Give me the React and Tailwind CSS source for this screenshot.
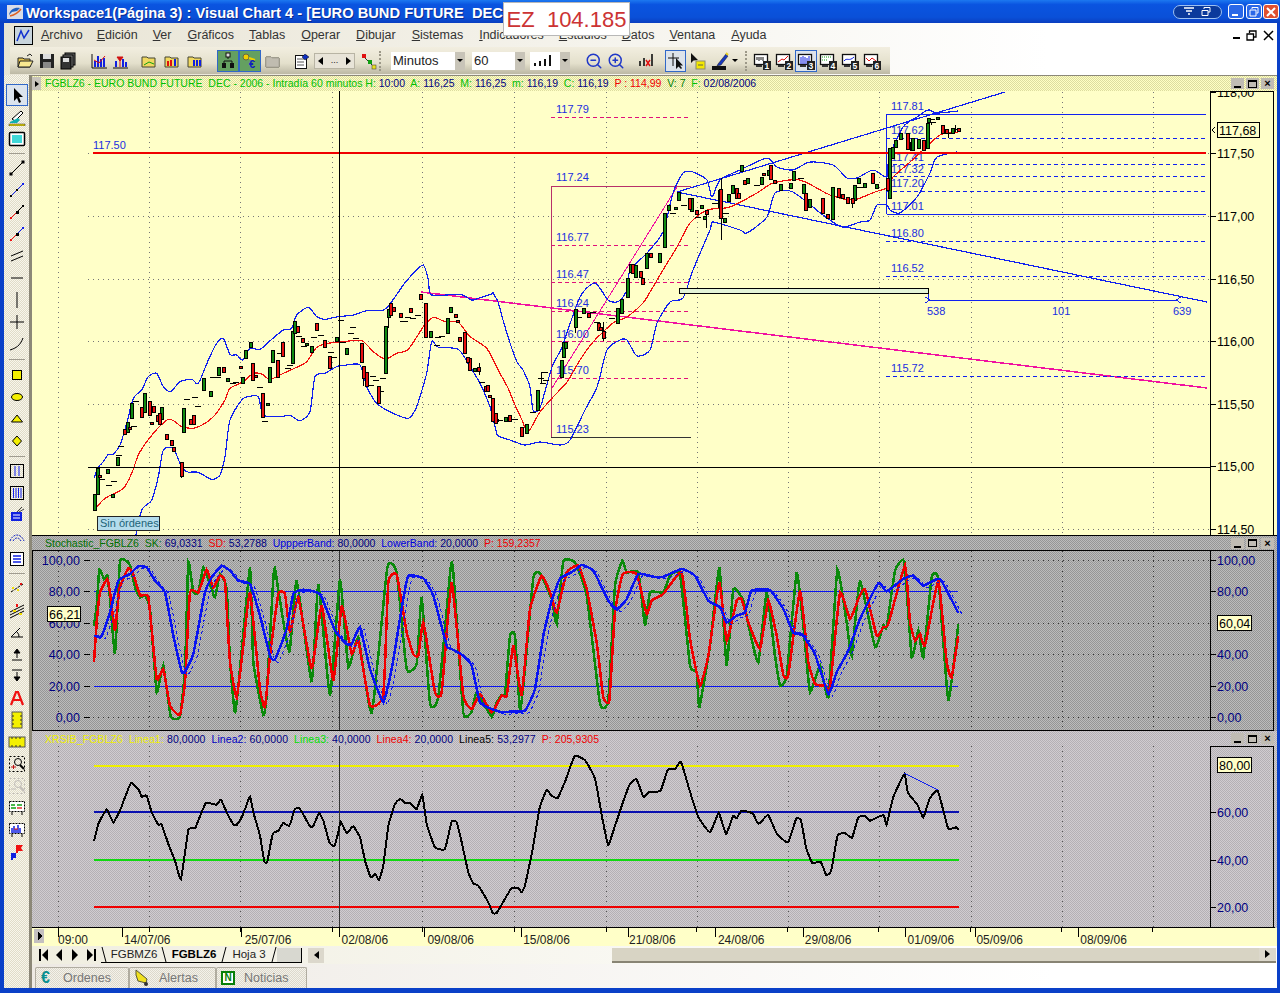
import React from 'react';
import { ZoomIn, ZoomOut } from 'lucide-react';

const z6 = (x, y) => [860 + x / 3, 90 + y / 3];
const z8 = (x, y) => [480 + x / 3, 90 + y / 3];
const z9 = (x, y) => [80 + x / 3, 260 + y / 3];
const pts = (a) => a.map(([x, y]) => `${x.toFixed(1)},${y.toFixed(1)}`).join(' ');
const pairs = (a, f) => a.map(([x, y]) => f(x, y));
const joinAt = (a, fa, b, fb, split) => [
  ...pairs(a, fa).filter((p) => p[0] < split),
  ...pairs(b, fb).filter((p) => p[0] >= split),
];

// hermite spline through the traced points, so the series don't look like straight segments
const smooth = (a, k = 0.35, n = 5) => {
  const out = [];
  for (let i = 0; i < a.length - 1; i++) {
    const p0 = a[Math.max(i - 1, 0)];
    const p1 = a[i];
    const p2 = a[i + 1];
    const p3 = a[Math.min(i + 2, a.length - 1)];
    for (let j = 0; j < n; j++) {
      const t = j / n;
      const h00 = 2 * t * t * t - 3 * t * t + 1;
      const h10 = t * t * t - 2 * t * t + t;
      const h01 = -2 * t * t * t + 3 * t * t;
      const h11 = t * t * t - t * t;
      out.push([0, 1].map((d) =>
        h00 * p1[d] + h10 * k * (p2[d] - p0[d]) + h01 * p2[d] + h11 * k * (p3[d] - p1[d])
      ));
    }
  }
  out.push(a[a.length - 1]);
  return out;
};

const upperBand = smooth([
  ...pairs([[43,655],[52,625],[70,605],[85,583],[100,582],[120,555],[140,490],[160,415],[185,390],[205,350],[230,340],[250,380],[272,395],[300,365],[335,358],[355,370],[385,300],[410,250],[430,235],[450,283],[470,285],[488,300],[510,265],[540,268],[575,238],[610,210],[635,205],[650,165],[685,142],[710,170],[735,178],[775,170],[820,165],[860,152],[910,150],[935,125],[970,75],[1000,40],[1030,15],[1045,60],[1055,105],[1140,103],[1175,120],[1200,113],[1240,100]], z9),
  [493,293],[498,302],[503,320],[510,343],[517,362],[523,370],[530,387],[533,410],[540,408],[552,367],[562,347],[580,297],[595,283],[608,300],[617,302],[623,297],[628,287],[630,270],[647,253],[663,232],[673,193],[683,173],[693,172],[707,180],[712,197],[720,180],[740,170],[767,158],[777,167],[793,170],[810,162],[833,165],[847,178],[857,178],[873,170],[887,177],[889,157],[903,127],[917,117],[928,110],[937,113],[958,111],
]);
const lowerBand = smooth([
  ...pairs([[167,830],[185,750],[215,720],[235,650],[250,570],[280,565],[300,610],[320,635],[355,637],[395,658],[420,645],[435,590],[450,480],[485,420],[505,410],[535,410],[550,465],[600,470],[630,466],[660,482],[690,455],[705,350],[735,340],[770,320],[800,315],[840,315],[860,380],[890,430],[935,458],[985,475],[1010,440],[1040,340],[1055,245],[1075,262],[1135,268],[1170,320],[1200,370],[1230,440],[1250,520],[1260,530]], z9),
  [510,440],[525,445],[540,442],[560,445],[570,440],[585,410],[597,387],[607,350],[620,340],[627,340],[637,356],[650,350],[657,323],[670,302],[683,298],[693,270],[710,230],[713,222],[740,230],[747,233],[767,217],[775,193],[793,192],[823,215],[842,227],[860,222],[870,220],[877,205],[887,205],[890,210],[900,213],[917,197],[930,173],[937,157],[957,152],
]);
const movingAvg = smooth([
  ...pairs([[43,750],[75,715],[130,685],[155,640],[175,585],[200,545],[235,503],[265,478],[285,485],[305,500],[340,505],[375,490],[405,465],[435,420],[450,385],[490,365],[520,340],[545,342],[570,358],[610,340],[650,322],[680,305],[710,262],[745,250],[790,245],[845,242],[880,275],[915,297],[950,280],[985,268],[1030,200],[1060,172],[1095,185],[1135,187],[1170,230],[1220,265],[1260,340]], z9),
  [508,388],[515,405],[522,420],[528,432],[540,412],[555,395],[567,382],[580,360],[593,342],[613,323],[627,317],[643,303],[653,287],[663,270],[677,247],[690,223],[707,210],[730,207],[757,193],[773,183],[800,180],[830,195],[853,200],[875,192],[886,188],[893,177],[910,162],[923,150],[940,135],[958,132],
]);

const toCandles = (list, f, color) =>
  list.map(([x, t, b]) => {
    const [px, pt] = f(x, t);
    return { x: Math.round(px), t: Math.round(pt), b: Math.round(f(x, b)[1]), color };
  });
const GREEN = '#108a10';
const RED = '#e81010';
const candles = [
  ...toCandles([[43,703,750],[52,625,703],[82,627,638],[97,703,712],[110,592,614],[140,487,517],[154,430,473],[193,400,455],[244,442,478],[310,445,517],[370,353,390],[391,393,407],[415,322,346],[442,355,364],[487,350,368],[496,270,295],[511,247,260],[568,322,367],[577,270,305],[637,212,310],[643,183,220],[679,250,256],[694,259,277],[769,232,244],[799,265,282],[916,198,340],[924,146,172],[1051,212,232],[1102,175,220],[1111,140,156],[1183,325,333],[562,430,436]], z9, GREEN),
  ...toCandles([[58,644,650],[132,507,522],[148,502,508],[184,442,470],[208,424,466],[220,439,457],[214,487,493],[230,465,483],[236,458,492],[259,523,538],[274,541,556],[280,562,574],[304,606,648],[331,478,493],[340,466,493],[430,322,337],[481,319,325],[517,310,361],[526,346,352],[547,400,472],[592,301,352],[607,246,289],[652,199,216],[667,235,247],[709,190,211],[733,241,262],[748,289,325],[844,250,307],[850,319,355],[859,337,379],[895,379,430],[931,130,166],[940,142,154],[961,160,172],[991,145,157],[1021,103,118],[1036,130,232],[1138,232,244],[1153,217,280],[1168,295,331],[1162,292,305],[1193,322,333],[1216,379,394],[1222,376,394],[1228,406,412],[1237,415,484],[1249,478,484],[1126,163,172],[1132,181,187]], z9, RED),
  ...toCandles([[243,810,860],[250,757,800],[256,757,775],[286,658,710],[310,655,670],[412,655,700],[424,628,670],[442,565,622],[451,522,545],[466,525,560],[499,490,535],[538,490,515],[553,370,472],[565,345,360],[584,352,358],[595,305,330],[634,325,362],[664,346,355],[673,379,388],[718,300,350],[733,385,397],[745,313,334],[757,286,310],[784,226,243],[802,265,280],[844,262,283],[865,241,256],[901,283,301],[931,280,295],[940,244,271],[970,283,310],[988,328,350],[1057,292,388],[1123,286,330],[1135,265,280],[1153,280,292],[1189,283,295]], z8, GREEN),
  ...toCandles([[325,670,682],[355,700,720],[361,712,720],[370,722,745],[457,522,548],[481,544,560],[487,565,583],[511,490,500],[628,325,358],[649,361,373],[679,360,373],[721,296,385],[769,295,325],[775,310,325],[793,270,283],[850,250,255],[871,226,268],[883,271,280],[976,310,360],[1027,325,370],[1042,373,385],[1075,295,320],[1087,313,325],[1102,320,340],[1117,325,340],[1177,250,280]], z8, RED),
  ...toCandles([[88,175,325],[95,170,205],[200,100,175],[105,150,170],[120,130,148],[155,145,180],[175,148,175],[232,82,88],[205,85,95],[275,115,130]], z6, GREEN),
  ...toCandles([[80,265,300],[140,130,178],[245,105,130],[258,118,130],[295,113,122],[188,150,180]], z6, RED),
  { x: 495, t: 413, b: 423, color: RED }, { x: 505, t: 417, b: 421, color: GREEN }, { x: 509, t: 415, b: 421, color: RED },
  { x: 521, t: 427, b: 436, color: RED }, { x: 526, t: 424, b: 433, color: GREEN }, { x: 537, t: 390, b: 410, color: GREEN },
];
const dashes = [
  ...pairs([[67,658],[88,676],[103,664],[118,586],[124,559],[163,499],[169,424],[322,418],[346,412],[355,439],[400,352],[415,352],[460,370],[469,367],[541,380],[556,484],[600,280],[625,325],[631,316],[658,229],[673,259],[703,232],[724,226],[754,277],[763,292],[784,181],[790,247],[814,220],[820,202],[829,235],[874,376],[880,349],[889,361],[904,394],[910,355],[970,184],[976,184],[985,172],[1000,175],[1015,166],[1072,256],[1075,232],[1087,229],[1207,367]], z9),
  ...pairs([[184,865],[190,880],[298,680],[340,665],[350,697],[395,685],[612,345],[655,380],[705,340],[738,368],[830,285],[962,265],[578,370],[1140,290]], z8),
  ...pairs([[215,88],[220,95],[268,130],[285,118]], z6),
  [500, 420], [515, 419], [533, 412], [541, 378], [545, 372], [546, 380],
];
const wicks = [[724,265,450,z8],[370,695,752,z8],[679,375,415,z8],[286,710,730,z8],[184,845,880,z8],[150,155,182,z6],[265,130,145,z6],[212,95,105,z6],[285,105,125,z6],[304,606,655,z9],[1198,310,345,z9],[850,319,378,z9],[925,146,205,z9],[1117,325,355,z8]];

const z7 = (x, y) => [30 + x / 3, 530 + y / 3];
const z10 = (x, y) => [500 + x / 3, 530 + y / 3];
const stochGreen = smooth(joinAt(
  [[192,290],[200,230],[208,122],[222,150],[232,140],[240,210],[255,375],[270,96],[300,108],[315,175],[330,205],[345,200],[360,240],[380,490],[400,410],[422,563],[450,563],[465,420],[475,98],[490,190],[505,190],[520,115],[545,180],[555,205],[570,135],[590,180],[600,400],[615,553],[630,420],[660,115],[670,400],[700,558],[710,500],[732,120],[745,185],[778,370],[800,155],[845,460],[865,165],[900,500],[930,150],[955,415],[985,325],[1025,555],[1072,115],[1100,130],[1130,420],[1160,405],[1175,205],[1200,525],[1225,505],[1262,115],[1270,130],[1300,552],[1325,548],[1340,490],[1385,563],[1400,520],[1415,498]], z7,
  [[15,495],[30,320],[45,320],[60,545],[75,420],[100,145],[120,132],[155,210],[170,285],[190,97],[225,100],[260,200],[300,525],[325,515],[345,170],[367,95],[380,130],[415,130],[435,290],[450,190],[490,190],[510,140],[540,135],[570,410],[590,430],[598,535],[630,350],[658,115],[680,410],[700,180],[730,215],[750,310],[775,400],[800,190],[825,380],[840,470],[860,440],[890,130],[910,290],[930,490],[960,410],[985,505],[1012,122],[1040,280],[1055,380],[1080,155],[1125,355],[1150,290],[1160,295],[1185,125],[1213,97],[1235,385],[1255,305],[1270,385],[1295,145],[1315,150],[1345,515],[1375,285]], z10, 505), 0.2);
const stochRed = smooth(joinAt(
  [[192,400],[200,280],[210,190],[232,150],[240,190],[255,305],[268,180],[295,118],[310,135],[330,200],[355,205],[380,450],[400,420],[420,530],[450,558],[465,460],[480,190],[505,190],[530,122],[550,175],[570,140],[585,160],[600,400],[620,505],[640,350],[660,190],[690,480],[705,535],[720,380],[745,195],[765,195],[780,310],[805,205],[845,420],[875,230],[910,455],[935,230],[965,375],[985,335],[1020,530],[1060,500],[1075,160],[1100,137],[1130,310],[1150,375],[1165,380],[1180,280],[1215,490],[1235,490],[1265,160],[1300,500],[1325,540],[1350,495],[1385,550],[1415,500]], z7,
  [[20,500],[40,350],[65,500],[90,240],[125,140],[150,190],[170,250],[200,130],[235,110],[260,180],[290,340],[310,505],[328,515],[345,250],[368,135],[410,135],[440,255],[455,215],[490,195],[545,130],[570,330],[600,470],[625,380],[658,160],[680,335],[710,215],[725,210],[745,280],[780,360],[805,215],[830,320],[850,438],[865,438],[900,185],[925,400],[945,465],[975,470],[990,475],[1020,190],[1050,270],[1075,210],[1095,180],[1130,320],[1150,295],[1165,285],[1215,110],[1230,280],[1245,335],[1260,315],[1275,350],[1315,155],[1340,400],[1355,445],[1375,320]], z10, 505), 0.2);
const stochBlue = smooth(joinAt(
  [[192,320],[215,322],[240,250],[265,155],[300,135],[325,112],[350,115],[375,155],[405,190],[430,320],[455,428],[465,428],[490,375],[525,190],[545,145],[575,110],[600,125],[625,155],[660,165],[690,260],[720,380],[735,392],[770,300],[790,195],[820,182],[870,195],[915,305],[950,345],[965,345],[990,295],[1020,420],[1060,520],[1085,420],[1120,210],[1135,140],[1180,148],[1210,200],[1250,350],[1265,360],[1300,380],[1325,410],[1350,520],[1385,540],[1415,550]], z7,
  [[30,548],[75,545],[105,480],[130,320],[155,215],[180,148],[215,130],[245,108],[280,125],[325,215],[350,242],[380,210],[415,135],[460,143],[490,143],[545,120],[585,140],[625,215],[660,235],[680,280],[710,260],[735,250],[755,185],[810,183],[850,240],[880,312],[905,315],[945,375],[985,495],[1010,430],[1045,365],[1080,270],[1135,162],[1160,187],[1210,150],[1240,140],[1270,170],[1320,150],[1375,252]], z10, 505), 0.2);

const z11 = (x, y) => [80 + x / 3, 730 + y / 3];
const z12 = (x, y) => [520 + x / 2.063, 730 + y / 3];
const rsiLine = smooth(joinAt(
  [[42,337],[55,285],[80,242],[100,280],[120,245],[135,205],[153,162],[175,180],[185,203],[200,200],[215,250],[235,287],[245,287],[265,345],[285,395],[303,450],[325,303],[345,298],[360,262],[378,222],[410,227],[423,212],[440,250],[460,287],[470,288],[485,265],[495,240],[510,203],[520,250],[540,320],[553,398],[562,398],[578,315],[595,305],[610,282],[628,290],[645,240],[660,240],[690,292],[700,290],[717,253],[730,275],[748,340],[763,352],[775,310],[782,278],[800,312],[820,292],[840,325],[855,395],[872,445],[885,435],[897,452],[910,410],[925,290],[945,225],[960,210],[975,222],[990,222],[1010,240],[1027,198],[1040,285],[1065,355],[1095,360],[1115,277],[1130,280],[1145,340],[1165,430],[1180,463],[1195,470],[1225,520],[1238,552],[1250,552],[1270,518],[1295,477],[1315,477],[1325,490]], z11,
  [[0,490],[10,470],[25,370],[40,240],[55,182],[65,200],[78,207],[95,150],[113,80],[135,95],[155,150],[170,270],[182,348],[195,295],[210,230],[225,170],[240,150],[255,205],[265,190],[290,185],[305,122],[320,120],[332,98],[350,185],[368,265],[392,310],[410,252],[425,315],[440,260],[447,268],[457,245],[480,253],[492,285],[512,258],[530,315],[553,340],[570,268],[580,275],[590,355],[603,402],[620,398],[632,438],[642,425],[655,320],[670,312],[685,326],[698,265],[712,262],[722,275],[750,258],[756,288],[770,205],[793,135],[800,190],[820,228],[832,265],[845,210],[862,185],[883,297],[900,295],[905,302]], z12, 522), 0.2);

const gridX = [58, 149, 240, 332, 422, 514, 606, 697, 788, 879, 971, 1062, 1153];

const Label = ({ x, y, children, fill = '#1a2ee0', size = 11 }) => (
  <text x={x} y={y} fill={fill} fontSize={size}>{children}</text>
);

const Grid = ({ top, bottom, rows, stroke = '#777' }) => (
  <g stroke={stroke} strokeDasharray="1 4">
    {gridX.map((x) => <line key={x} x1={x} y1={top} x2={x} y2={bottom} />)}
    {rows.map((y) => <line key={y} x1={88} y1={y} x2={1210} y2={y} />)}
  </g>
);

const Axis = ({ top, bottom, items, fill = '#000' }) => (
  <g>
    <path d={`M1210.5 ${bottom}V${top + 0.5}H1273.5V${bottom}`} fill="none" stroke="#000" />
    {items.map(([y, t]) => (
      <g key={t}>
        <line x1="1211" y1={y} x2="1216" y2={y} stroke="#000" />
        <text x="1217" y={y + 5} fill={fill} fontSize="12.5">{t}</text>
      </g>
    ))}
  </g>
);

const ValueBox = ({ x, y, w, children }) => (
  <g>
    <rect x={x + 0.5} y={y + 0.5} width={w} height="15" fill="#ffffc8" stroke="#000" />
    <text x={x + 2} y={y + 12.5} fontSize="12.5" fill="#000">{children}</text>
  </g>
);

const fibBlue = [[138, '117.62', 134], [164, '117.41', 161], [176, '117.32', 173], [191, '117.20', 187], [241, '116.80', 237], [276, '116.52', 272], [376, '115.72', 372]];
const fibPink = [[117, '117.79', 113], [245, '116.77', 241], [282, '116.47', 278], [311, '116.24', 307], [341, '116.00', 338], [378, '115.70', 374]];

const MainChart = () => (
  <svg className="block" width="1243" height="446" viewBox="32 91 1243 446" shapeRendering="crispEdges">
    <Grid top={92} bottom={537} rows={[153, 216, 279, 341, 404, 529]} />
    {fibPink.map(([y]) => <line key={y} x1="551" y1={y} x2="691" y2={y} stroke="#e0107a" strokeDasharray="4 3" />)}
    <path d="M691 186.5H551.5V437" fill="none" stroke="#b8306a" />
    <line x1="551" y1="437.5" x2="691" y2="437.5" stroke="#333" />
    <polyline points="552,388 677,187" fill="none" stroke="#f010a0" />
    <polyline points="421,292 1207,388" fill="none" stroke="#f010a0" strokeWidth="1.500" />
    {fibPink.map(([y, t, ty]) => <Label key={t} x="556" y={ty}>{t}</Label>)}
    <Label x="556" y="181">117.24</Label>
    <Label x="556" y="433">115.23</Label>

    <path d="M886.5 214V114.5H1206M886.5 214.5H1206" fill="none" stroke="#1020f0" />
    {fibBlue.map(([y]) => <line key={y} x1="886" y1={y} x2="1206" y2={y} stroke="#1020f0" strokeDasharray="4 3" />)}
    <Label x="891" y="110">117.81</Label>
    {fibBlue.map(([y, t, ty]) => <Label key={t} x="891" y={ty}>{t}</Label>)}
    <Label x="891" y="210">117.01</Label>
    <polyline points="677,192 1005,92" fill="none" stroke="#1020f0" strokeWidth="1.200" />
    <polyline points="677,192 1207,302" fill="none" stroke="#1020f0" strokeWidth="1.200" />

    <polyline points={pts(upperBand)} fill="none" stroke="#1020f0" strokeWidth="1.200" />
    <polyline points={pts(lowerBand)} fill="none" stroke="#1020f0" strokeWidth="1.200" />
    <polyline points={pts(movingAvg)} fill="none" stroke="#f01010" strokeWidth="1.200" />

    <line x1="93" y1="153" x2="1206" y2="153" stroke="#f00000" strokeWidth="2" />
    <Label x="93" y="149">117.50</Label>
    <line x1="88" y1="467" x2="1210" y2="467" stroke="#000" />
    <line x1="339.5" y1="91" x2="339.5" y2="537" stroke="#000" />

    {wicks.map(([x, t, b, f]) => {
      const [px, py] = f(x, t);
      return <line key={`${x}-${t}`} x1={Math.round(px) + 0.5} y1={py} x2={Math.round(px) + 0.5} y2={f(x, b)[1]} stroke="#000" />;
    })}
    {dashes.map(([x, y]) => <line key={`${x}-${y}`} x1={x - 3} y1={Math.round(y) + 0.5} x2={x + 3} y2={Math.round(y) + 0.5} stroke="#000" />)}
    {candles.map((c) => (
      <rect key={`${c.x}-${c.t}`} x={c.x - 1} y={c.t} width="3" height={Math.max(c.b - c.t, 2)} fill={c.color} stroke="#000" />
    ))}

    <rect x="679.5" y="288.5" width="249" height="5" fill="#e4f4d8" stroke="#000" />
    <path d="M928.5 294V300.5H1178M925 297L930 300L925 303M1181 297L1176 300L1181 303" fill="none" stroke="#1020f0" />
    <Label x="927" y="315">538</Label>
    <Label x="1052" y="315">101</Label>
    <Label x="1173" y="315">639</Label>

    <rect x="97.5" y="516.5" width="62" height="14" fill="#b4dcec" stroke="#222" />
    <text x="100" y="527" fontSize="11" fill="#1c6478">Sin órdenes</text>

    <Axis top={91} bottom={537} items={[[92, '118,00'], [153, '117,50'], [216, '117,00'], [279, '116,50'], [341, '116,00'], [404, '115,50'], [466, '115,00'], [529, '114,50']]} />
    <path d="M1215 127L1212 130L1215 133" fill="none" stroke="#000" />
    <ValueBox x={1217} y={122} w={42}>117,68</ValueBox>
  </svg>
);

const StochChart = () => (
  <svg className="block" width="1243" height="181" viewBox="32 551 1243 181" shapeRendering="crispEdges">
    <Grid top={552} bottom={732} rows={[561, 624, 655, 718]} stroke="#333" />
    <line x1="94" y1="592.5" x2="958" y2="592.5" stroke="#0a14f0" />
    <line x1="94" y1="687.5" x2="958" y2="687.5" stroke="#0a14f0" />
    <line x1="339.5" y1="551" x2="339.5" y2="732" stroke="#333" />
    <polyline points={pts(stochGreen)} fill="none" stroke="#0a8a0a" strokeWidth="2.500" />
    <polyline points={pts(stochRed)} fill="none" stroke="#f00000" strokeWidth="2.500" />
    <polyline points={pts(stochBlue)} transform="translate(4 2)" fill="none" stroke="#0a14f0" strokeDasharray="3 3" />
    <polyline points={pts(stochBlue)} fill="none" stroke="#0a14f0" strokeWidth="2.500" />
    <path d="M32.5 732V551.5H1210" fill="none" stroke="#000" />
    <path d="M32.5 731.5H1273.5" fill="none" stroke="#000" />
    {[[561, '100,00'], [592, '80,00'], [624, '60,00'], [655, '40,00'], [687, '20,00'], [718, '0,00']].map(([y, t]) => (
      <g key={t}>
        <text x="80" y={y + 5} textAnchor="end" fill="#000080" fontSize="12.5">{t}</text>
        <line x1="84" y1={y} x2="90" y2={y} stroke="#000" />
      </g>
    ))}
    <Axis top={551} bottom={732} fill="#000080" items={[[561, '100,00'], [592, '80,00'], [655, '40,00'], [687, '20,00'], [718, '0,00']]} />
    <ValueBox x={47} y={607} w={33}>66,21</ValueBox>
    <ValueBox x={1217} y={616} w={34}>60,04</ValueBox>
  </svg>
);

const RsiChart = () => (
  <svg className="block" width="1243" height="182" viewBox="32 747 1243 182" shapeRendering="crispEdges">
    <Grid top={747} bottom={928} rows={[]} stroke="#555" />
    <line x1="94" y1="766.5" x2="959" y2="766.5" stroke="#f0f000" strokeWidth="2" />
    <line x1="94" y1="813" x2="959" y2="813" stroke="#0a10b0" strokeWidth="2" />
    <line x1="94" y1="861" x2="959" y2="861" stroke="#10d810" strokeWidth="2" />
    <line x1="94" y1="908" x2="959" y2="908" stroke="#f00000" strokeWidth="2" />
    <line x1="339.5" y1="733" x2="339.5" y2="928" stroke="#333" />
    <polyline points={pts(rsiLine)} fill="none" stroke="#000" strokeWidth="2" />
    <line x1="904" y1="774" x2="938" y2="791" stroke="#1020f0" />
    <line x1="32" y1="928.5" x2="1275" y2="928.5" stroke="#000" />
    <Axis top={747} bottom={929} fill="#000080" items={[[813, '60,00'], [861, '40,00'], [908, '20,00']]} />
    <ValueBox x={1217} y={758} w={34}>80,00</ValueBox>
  </svg>
);

const TimeAxis = () => (
  <svg className="block" width="1243" height="18" viewBox="32 929 1243 18" shapeRendering="crispEdges">
    <rect x="33" y="930" width="10" height="14" fill="#c4c0c0" />
    <path d="M37 933L41 937L37 941Z" fill="#000" />
    {[57, 122, 241, 339, 424, 521, 628, 716, 804, 906, 976, 1079].map((x) => <line key={x} x1={x} y1="929" x2={x} y2="938" stroke="#000" />)}
    {gridX.slice(1).map((x) => <line key={x} x1={x} y1="929" x2={x} y2="933" stroke="#000" />)}
    {[[57, '09:00'], [123, '14/07/06'], [244, '25/07/06'], [341, '02/08/06'], [427, '09/08/06'], [523, '15/08/06'], [629, '21/08/06'], [718, '24/08/06'], [805, '29/08/06'], [908, '01/09/06'], [977, '05/09/06'], [1081, '08/09/06']].map(([x, t]) => (
      <text key={t} x={x} y="945" fontSize="12" fill="#222">{t}</text>
    ))}
  </svg>
);

const PaneButtons = () => (
  <div className="flex gap-[2px] mr-[3px]">
    <span className="w-[13px] h-[11px] bg-[#c0bcb4] flex items-end justify-center pb-[1px]"><span className="w-[7px] h-[2px] bg-black" /></span>
    <span className="w-[13px] h-[11px] bg-[#c0bcb4] flex items-center justify-center"><span className="w-[9px] h-[8px] border border-black border-t-2" /></span>
    <span className="w-[13px] h-[11px] bg-[#c0bcb4] flex items-center justify-center text-[11px] leading-none font-bold text-black">×</span>
  </div>
);

const Ico = ({ children, w = 18, h = 18 }) => (
  <svg width={w} height={h} viewBox={`0 0 ${w} ${h}`} className="block">{children}</svg>
);

const tools = [
  { active: true, icon: <path d="M6 2v13l3-3 2 5 2-1-2-5h4z" fill="#000" /> },
  { icon: <g><path d="M4 11L13 3l2 2-8 8z" fill="#fff" stroke="#000" /><path d="M2 14l8-4 2 2-3 3H2z" fill="#10b0b0" /><rect x="1" y="16" width="16" height="2" fill="#e0d000" stroke="#333" strokeWidth=".5" /></g> },
  { icon: <g><rect x="1.5" y="2.5" width="15" height="13" rx="1" fill="#fff" stroke="#000" strokeWidth="1.5" /><rect x="4" y="5" width="10" height="8" fill="#40d8d8" /></g> },
  'sep7',
  { icon: <g stroke="#000"><line x1="3" y1="15" x2="15" y2="3" /><rect x="2" y="14" width="2" height="2" fill="#000" /><rect x="14" y="2" width="2" height="2" fill="#000" /></g> },
  { icon: <g><line x1="3" y1="15" x2="15" y2="3" stroke="#1020f0" /><rect x="2" y="14" width="2" height="2" /><rect x="8" y="8" width="2" height="2" /><rect x="14" y="2" width="2" height="2" fill="#1020f0" /></g> },
  { icon: <g><line x1="3" y1="15" x2="9" y2="9" stroke="#f01010" /><line x1="9" y1="9" x2="15" y2="3" stroke="#000" /><rect x="2" y="14" width="2" height="2" fill="#f01010" /><rect x="8" y="8" width="3" height="3" /><rect x="14" y="2" width="2" height="2" /></g> },
  { icon: <g><line x1="3" y1="15" x2="9" y2="9" stroke="#f01010" /><line x1="9" y1="9" x2="15" y2="3" stroke="#1020f0" /><rect x="2" y="14" width="2" height="2" fill="#f01010" /><rect x="8" y="8" width="3" height="3" /><rect x="14" y="2" width="2" height="2" fill="#1020f0" /></g> },
  { icon: <path d="M3 9L15 4M3 14L15 9" stroke="#000" fill="none" /> },
  { icon: <line x1="3" y1="9" x2="15" y2="9" stroke="#000" /> },
  { icon: <line x1="9" y1="1" x2="9" y2="17" stroke="#000" /> },
  { icon: <path d="M9 2V16M2 9H16" stroke="#000" /> },
  { icon: <path d="M2 15C8 13 12 11 15 3" stroke="#000" fill="none" /> },
  'sep9',
  { icon: <rect x="4.5" y="4.5" width="9" height="9" fill="#f4f000" stroke="#000" /> },
  { icon: <ellipse cx="9" cy="9" rx="5.5" ry="3.5" fill="#f4f000" stroke="#000" /> },
  { icon: <path d="M9 5L14.5 12H3.500Z" fill="#f4f000" stroke="#000" /> },
  { icon: <path d="M9 4L13.500 9L9 14L4.500 9Z" fill="#f4f000" stroke="#000" /> },
  'sep8',
  { icon: <g fill="none"><rect x="2.5" y="2.500" width="13" height="13" stroke="#000" /><path d="M7 4V14M11 4V14" stroke="#1020f0" /></g> },
  { icon: <g fill="none"><rect x="2.5" y="2.500" width="13" height="13" stroke="#000" /><path d="M5.500 4V14M8 4V14M10.500 4V14M13 4V14" stroke="#1020f0" /></g> },
  { icon: <g><rect x="3" y="6" width="11" height="9" fill="#1020e0" /><path d="M5 9H12M5 12H12" stroke="#fff" /><path d="M9 6L14 1M11 6L16 3" stroke="#444" /></g> },
  { icon: <path d="M2 13C5 5 13 5 16 13M5 13C7 9 11 9 13 13" fill="none" stroke="#1020c0" strokeDasharray="2 1" /> },
  { icon: <g><rect x="2.5" y="2.500" width="13" height="13" fill="#fff" stroke="#000" /><path d="M5 6H13M5 9H13M5 12H13" stroke="#1020e0" strokeWidth="1.300" /></g> },
  'sep7',
  { icon: <g><path d="M3 13L15 5" stroke="#000" strokeDasharray="3 1" /><rect x="4" y="8" width="2" height="2" fill="#f4e000" /><rect x="9" y="10" width="2" height="2" fill="#f4e000" /><rect x="12" y="4" width="2" height="2" fill="#e01010" /></g> },
  { icon: <g><path d="M2 11L16 4M2 14L16 7M2 17L16 10" stroke="#000" /><rect x="8" y="3" width="2" height="3" fill="#f01010" /><rect x="5" y="9" width="3" height="2" fill="#f4e000" /><rect x="11" y="12" width="3" height="2" fill="#f4e000" /></g> },
  { icon: <path d="M3 14H15M3 14L12 5M9 9A6 6 0 0 1 11 14" fill="none" stroke="#000" /> },
  { icon: <path d="M4 15H14M9 13V5M6 8L9 4L12 8Z" stroke="#000" /> },
  { icon: <path d="M4 3H14M9 5V13M6 10L9 14L12 10Z" stroke="#000" /> },
  { icon: <path d="M3 16L8 3H10L15 16M5 11H13" fill="none" stroke="#f01010" strokeWidth="2.200" /> },
  { icon: <g><rect x="4" y="1" width="10" height="16" fill="#f4f000" stroke="#555" /><path d="M4 5H6M4 9H6M4 13H6M12 5H14M12 9H14M12 13H14" stroke="#333" /></g> },
  { icon: <g><rect x="1" y="4" width="16" height="10" fill="#f4f000" stroke="#555" /><path d="M4 4V6M8 4V6M12 4V6M4 12V14M8 12V14M12 12V14" stroke="#333" /></g> },
  { icon: <g fill="none" stroke="#000"><rect x="1.500" y="1.500" width="15" height="15" strokeDasharray="2 2" /><circle cx="10" cy="7" r="3.500" /><path d="M12 10L16 14" strokeWidth="2" /><path d="M3 12H8M5.500 10V14" stroke="#c01010" /></g> },
  { icon: <g fill="none" stroke="#c0bcb8"><rect x="1.500" y="1.500" width="15" height="15" strokeDasharray="2 2" /><circle cx="10" cy="7" r="3.500" /><path d="M12 10L16 14" strokeWidth="2" /><path d="M3 12H8" /></g> },
  { icon: <g><rect x="1.500" y="2.500" width="15" height="10" fill="#fff" stroke="#000" strokeDasharray="2 1" /><path d="M3 6H7M9 6H14M3 9H8" stroke="#10a010" strokeWidth="1.300" /><path d="M9 9H14" stroke="#e01010" strokeWidth="1.300" /><path d="M4 13V16M14 13V16" stroke="#000" /></g> },
  { icon: <g><rect x="1.500" y="2.500" width="15" height="10" fill="#fff" stroke="#000" strokeDasharray="2 1" /><path d="M4 12V7M6 12V5M8 12V8M10 12V4M12 12V7" stroke="#1020e0" strokeWidth="1.500" /><path d="M6 8H10" stroke="#e01010" /><path d="M4 13V16M14 13V16" stroke="#000" /></g> },
  { icon: <g><path d="M8 2H15L13 5L15 8H10V10H8Z" fill="#f01010" /><path d="M3 10H8V15H5V17H3Z" fill="#1020e0" /></g> },
];

const SideTools = () => (
  <div className="w-[28px] shrink-0 flex flex-col pt-[9px] pl-[1px] border-r-[3px] border-[#8c8878] bg-[image:repeating-conic-gradient(#f8f6ec_0_25%,#e0dcc8_0_50%)] bg-size-[2px_2px]">
    {tools.map((t, i) =>
      typeof t === 'string' ? (
        <div key={i} className={`${t === 'sep7' ? 'h-[7px]' : t === 'sep8' ? 'h-[8px]' : 'h-[9px]'} flex items-center justify-center`}>
          <span className="w-[16px] h-px bg-[#a09c90]" />
        </div>
      ) : (
        <div key={i} className="h-[22px] flex items-center justify-center">
          <div className={t.active ? 'border border-[#3168c8] bg-[#dce4ee] p-px' : ''}>
            <Ico>{t.icon}</Ico>
          </div>
        </div>
      )
    )}
  </div>
);

const Slot = ({ className = '', active, children }) => (
  <div className={`w-[21px] h-[22px] shrink-0 flex items-center justify-center ${active ? 'border border-[#3168c8]' : ''} ${className}`}>{children}</div>
);

const Folder = ({ children }) => (
  <Ico>
    <path d="M1 5h5l1 1h7v9H1z" fill="#f0d860" stroke="#443" />
    {children}
  </Ico>
);

const Screen = ({ n, children }) => (
  <Ico>
    <rect x="1.500" y="2.500" width="13" height="10" fill="#fff" stroke="#111" strokeWidth="1.300" />
    {children}
    <rect x="3" y="13" width="6" height="2" fill="#333" />
    <rect x="10" y="9" width="8" height="9" fill="#222" />
    <text x="11.500" y="17" fontSize="8.500" fontWeight="bold" fill="#fff">{n}</text>
  </Ico>
);

const Grip = () => <div className="w-[3px] h-[20px] shrink-0 border-l-2 border-dotted border-[#9c9888]" />;

const Select = ({ className, children }) => (
  <div className={`h-[18px] shrink-0 bg-white flex items-center justify-between text-[13px] text-[#222] ${className}`}>
    <span className="pl-[2px]">{children}</span>
    <span className="w-[10px] h-[18px] bg-[#c8c4b8] flex items-center justify-center">
      <span className="border-x-[3px] border-t-[3px] border-x-transparent border-t-black" />
    </span>
  </div>
);

const Toolbar = () => (
  <div className="h-[28px] flex items-start bg-[linear-gradient(to_right,#e8e4d4,#ffffff_82%)]">
    <div className="h-[27px] w-[880px] ml-[6px] pl-[5px] flex items-center bg-[linear-gradient(to_bottom,#f2eee0,#e4e0cc_60%,#bcb8a4)]">
      <Slot><Ico><path d="M1 6h5l1 1h6v8H1z" fill="#e8c850" stroke="#222" /><path d="M3 9h13l-3 6H1z" fill="#f8e890" stroke="#222" /><path d="M10 4l3-2 2 2" fill="none" stroke="#222" /></Ico></Slot>
      <Slot><Ico><rect x="2" y="2" width="14" height="14" fill="#222" /><rect x="5" y="2" width="8" height="5" fill="#ddd" /><rect x="5" y="10" width="8" height="6" fill="#888" /></Ico></Slot>
      <Slot><Ico><rect x="6" y="1" width="10" height="12" fill="#666" stroke="#000" /><rect x="4" y="3" width="10" height="12" fill="#888" stroke="#000" /><rect x="2" y="5" width="10" height="12" fill="#333" stroke="#000" /><rect x="4" y="6" width="6" height="4" fill="#ddd" /></Ico></Slot>
      <Slot className="ml-[10px]"><Ico><path d="M2 2V16H17" stroke="#111" fill="none" /><path d="M5 15V9M8 15V4M11 15V7M14 15V6" stroke="#1020e0" strokeWidth="2" /><path d="M4 8L9 11L15 4" stroke="#e01010" fill="none" /></Ico></Slot>
      <Slot><Ico><path d="M2 16H17" stroke="#111" /><path d="M5 15V9M12 15V7M15 15V10" stroke="#1020e0" strokeWidth="2" /><path d="M9 15V7M6 5H12L9 9Z" stroke="#d01010" fill="#d01010" /></Ico></Slot>
      <Slot className="ml-[9px] mr-[2px]"><Folder><path d="M3 13L8 10L13 12" stroke="#10a010" fill="none" /></Folder></Slot>
      <Slot className="mr-[2px]"><Folder><path d="M4 14V9M7 14V8" stroke="#e01010" strokeWidth="2" /><path d="M11 14V7" stroke="#1020e0" strokeWidth="2" /></Folder></Slot>
      <Slot><Folder><path d="M7 14V8M10 14V8M13 14V8" stroke="#1020e0" strokeWidth="2" /></Folder></Slot>
      <div className="ml-[11px] w-[22px] h-[22px] shrink-0 bg-[#64a060] border border-[#3168c8] flex items-center justify-center">
        <Ico><path d="M9 3V7M5 9H13M5 9V12M13 9V12" stroke="#111" fill="none" /><rect x="7" y="1" width="4" height="4" fill="#ddd" stroke="#111" /><rect x="3" y="11" width="4" height="5" fill="#111" /><rect x="11" y="11" width="4" height="5" fill="#111" /></Ico>
      </div>
      <div className="w-[22px] h-[22px] shrink-0 bg-[#64a060] border border-[#3168c8] flex items-center justify-center">
        <Ico><circle cx="5" cy="5" r="3" fill="#f0d000" stroke="#664" /><path d="M8 6L14 8" stroke="#f0d000" strokeWidth="2" /><text x="8" y="16" fontSize="11" fontWeight="bold" fill="#1020c0">€</text></Ico>
      </div>
      <Slot className="ml-[2px]"><Folder><path d="M1 5h5l1 1h7v9H1z" fill="#c0bcb0" stroke="#a8a498" /></Folder></Slot>
      <Slot className="ml-[7px]"><Ico><rect x="2.500" y="3.500" width="11" height="13" fill="#fff" stroke="#111" /><path d="M4 7H11M4 10H11M4 13H11" stroke="#555" /><path d="M9 5L12 2L16 5L12 8Z" fill="#1030c0" stroke="#111" strokeWidth=".5" /></Ico></Slot>
      <div className="ml-[2px] w-[41px] h-[16px] shrink-0 flex bg-[#e8e4d8] border border-[#b8b4a4] text-[9px] leading-none items-center justify-between px-[3px]">
        <span className="border-y-[4px] border-r-[5px] border-y-transparent border-r-black" />
        <span className="text-[#222]">...</span>
        <span className="border-y-[4px] border-l-[5px] border-y-transparent border-l-black" />
      </div>
      <Slot className="ml-[3px]"><Ico><path d="M4 5L9 10L13 14" stroke="#333" fill="none" /><rect x="2" y="2" width="4" height="4" fill="#e01010" /><rect x="8" y="8" width="4" height="4" fill="#10a010" /><rect x="12" y="13" width="4" height="4" fill="#e8e020" stroke="#333" strokeWidth=".5" /></Ico></Slot>
      <Grip />
      <Select className="ml-[9px] w-[74px] pr-0">Minutos</Select>
      <Select className="ml-[7px] w-[53px]">60</Select>
      <Select className="ml-[5px] w-[40px]"><svg width="22" height="14" viewBox="0 0 22 14" className="block"><path d="M3 12V9M8 12V7M13 12V5M18 12V1" stroke="#111" strokeWidth="2" /></svg></Select>
      <Slot className="ml-[13px]"><ZoomOut size={18} color="#2038c8" /></Slot>
      <Slot className="ml-px"><ZoomIn size={18} color="#2038c8" /></Slot>
      <Slot className="ml-[9px]"><Ico><path d="M3 14V9M7 14V6M15 14V2" stroke="#111" strokeWidth="1.600" /><path d="M9 8L13 14M13 8L9 14" stroke="#e01010" strokeWidth="1.500" /></Ico></Slot>
      <Slot active className="ml-[9px] bg-[#dde3ea]"><Ico><path d="M6 1V14M1 6H12" stroke="#111" /><path d="M9 6V17L11.500 14.500L14 17L15 16L13 13.500H16Z" fill="#111" /></Ico></Slot>
      <Slot className="ml-px"><Ico><path d="M2 1V11L4.500 8.500L9 8Z" fill="#111" /><rect x="7" y="9" width="9" height="8" fill="#f4e800" stroke="#887" /><path d="M9 13H14" stroke="#664" /></Ico></Slot>
      <Slot className="ml-px"><Ico><path d="M7 12L15 2L17 4L10 13L6 14Z" fill="#1838c0" stroke="#111" strokeWidth=".5" /><path d="M15 1L17 3" stroke="#e8d020" strokeWidth="2" /><rect x="1" y="14" width="14" height="4" fill="#111" /></Ico></Slot>
      <span className="ml-[2px] mr-[7px] border-x-[3px] border-t-[3px] border-x-transparent border-t-black" />
      <Grip />
      {[1, 2, 3, 4, 5, 6].map((n) => (
        <div key={n} className={`w-[22px] h-[22px] shrink-0 flex items-center justify-center ${n === 1 ? 'ml-[3px]' : ''} ${n === 3 ? 'border border-[#3168c8] bg-[#dde3ea]' : ''}`}>
          <Screen n={n}>
            {n === 1 && <path d="M4 5V8M6 5V9M8 5V8M10 5V9" stroke="#111" />}
            {n === 2 && <path d="M3 10L7 7L9 8L13 4" stroke="#e01010" fill="none" />}
            {n === 3 && <path d="M4 5V12M6 4V12M8 5V12M10 6V12M12 4V12" stroke="#1020e0" />}
            {n === 4 && <path d="M3 5H13M3 8H8" stroke="#10a010" strokeDasharray="1 1" />}
            {n === 5 && <path d="M3 9C6 5 8 10 13 5" stroke="#1020e0" fill="none" />}
            {n === 6 && <path d="M3 6L6 9L9 6L13 9" stroke="#e01010" fill="none" />}
          </Screen>
        </div>
      ))}
    </div>
  </div>
);

const menus = [
  ['ml-[8px]', 'A', 'rchivo'],
  ['ml-[14px]', 'E', 'dición'],
  ['ml-[15px]', 'V', 'er'],
  ['ml-[16px]', 'G', 'ráficos'],
  ['ml-[15px]', 'T', 'ablas'],
  ['ml-[16px]', 'O', 'perar'],
  ['ml-[16px]', 'D', 'ibujar'],
  ['ml-[16px]', 'S', 'istemas'],
  ['ml-[16px]', 'I', 'ndicadores'],
  ['ml-[15px]', 'E', 'studios'],
  ['ml-[15px]', 'D', 'atos'],
  ['ml-[15px]', 'V', 'entana'],
  ['ml-[16px]', 'A', 'yuda'],
];

const MenuBar = () => (
  <div className="h-[24px] flex items-center bg-[linear-gradient(to_right,#e8e4d4,#ffffff_82%)] text-[12.5px] text-[#333]">
    <div className="ml-[10px] w-[19px] h-[19px] shrink-0 bg-[#c8d4dc] border border-black flex items-center justify-center">
      <svg width="15" height="15" viewBox="0 0 15 15" className="block"><path d="M1 13L5 3L8 10L13 2" stroke="#1030d0" strokeWidth="1.500" fill="none" /></svg>
    </div>
    {menus.map(([ml, first, rest]) => (
      <span key={first + rest} className={ml}><u>{first}</u>{rest}</span>
    ))}
    <div className="ml-auto mr-[3px] flex items-center gap-[6px]">
      <span className="w-[7px] h-[2px] bg-black mt-[6px]" />
      <svg width="11" height="11" viewBox="0 0 11 11" className="block"><path d="M3.500 3V1H10V7H7.500M1 4H7.500V10H1Z" fill="none" stroke="#000" strokeWidth="1.300" /></svg>
      <svg width="11" height="11" viewBox="0 0 11 11" className="block"><path d="M1 1L10 10M10 1L1 10" stroke="#000" strokeWidth="1.500" /></svg>
    </div>
  </div>
);

const TitleBar = () => (
  <div className="h-[23px] flex items-center bg-[linear-gradient(to_bottom,#1c78f0,#0a54e0_20%,#0a50d8_75%,#0a3ec0)] text-white">
    <svg width="18" height="18" viewBox="0 0 18 18" className="block ml-[6px] shrink-0">
      <rect x="1" y="2" width="16" height="14" fill="#d8dce8" />
      <path d="M3 12C4 6 9 4 14 5L11 8L6 9Z" fill="#2060c0" />
      <path d="M4 13C8 12 12 10 15 6" stroke="#e06020" strokeWidth="1.500" fill="none" />
    </svg>
    <span className="ml-[2px] pt-[3px] text-[14.700px] font-bold whitespace-pre [text-shadow:1px_1px_0_#0a2a90]">Workspace1(Página 3) : Visual Chart 4 - [EURO BUND FUTURE  DEC</span>
    <div className="ml-auto mr-[1px] flex items-center">
      <div className="w-[49px] h-[14px] rounded-full bg-[#0b3a9c] border border-[#9cc0f0] flex items-center justify-center gap-[7px] mr-[6px]">
        <svg width="10" height="9" viewBox="0 0 10 9" className="block"><path d="M0 1H10M2 4H8M4 7H6" stroke="#fff" strokeWidth="1.500" /></svg>
        <svg width="10" height="9" viewBox="0 0 10 9" className="block"><path d="M3 2V0.500H9V5H7M1 3.500H7V8.500H1Z" stroke="#fff" fill="none" /></svg>
      </div>
      <div className="w-[16px] h-[15px] rounded-[3px] border border-white bg-[#2a68e8] flex items-end pl-[3px] pb-[2px]"><span className="w-[6px] h-[2px] bg-white" /></div>
      <div className="ml-[2px] w-[16px] h-[15px] rounded-[3px] border border-white bg-[#2a68e8] flex items-center justify-center">
        <svg width="10" height="10" viewBox="0 0 10 10" className="block"><path d="M3 2V0.500H9V6H7.500M1 3H7V9H1Z" stroke="#fff" fill="none" /></svg>
      </div>
      <div className="ml-px w-[16px] h-[15px] rounded-[3px] border border-white bg-[#e05030] flex items-center justify-center">
        <svg width="10" height="10" viewBox="0 0 10 10" className="block"><path d="M1 1L9 9M9 1L1 9" stroke="#fff" strokeWidth="2" /></svg>
      </div>
    </div>
  </div>
);

const SheetNav = ({ children }) => <div className="w-[16px] h-[15px] shrink-0 flex items-center justify-center gap-px">{children}</div>;
const Left = () => <span className="border-y-[6px] border-r-[6px] border-y-transparent border-r-black" />;
const Right = () => <span className="border-y-[6px] border-l-[6px] border-y-transparent border-l-black" />;
const Slash = ({ back }) => (
  <svg width="6" height="15" viewBox="0 0 6 15" className="block shrink-0"><path d={back ? 'M1 0L5 15' : 'M5 0L1 15'} stroke="#000" /></svg>
);

const SheetTabs = () => (
  <div className="h-[18px] flex items-center text-[11.5px] text-[#222] bg-[linear-gradient(to_right,#f0eee0,#ffffff_82%)]">
    <div className="ml-[3px] flex items-center">
      <SheetNav><span className="w-[2px] h-[12px] bg-black" /><Left /></SheetNav>
      <SheetNav><Left /></SheetNav>
      <SheetNav><Right /></SheetNav>
      <SheetNav><Right /><span className="w-[2px] h-[12px] bg-black" /></SheetNav>
    </div>
    <div className="ml-[2px] h-[15px] flex items-center border-b border-black">
      <Slash back />
      <span className="w-[54px] text-center">FGBMZ6</span>
      <Slash back />
      <span className="w-[54px] text-center font-bold text-black">FGBLZ6</span>
      <Slash />
      <span className="w-[44px] text-center">Hoja 3</span>
      <Slash />
      <span className="w-[24px] h-[14px] bg-[#d8d8d0]" />
    </div>
    <span className="w-px h-[15px] bg-black" />
    <div className="ml-[6px] w-[16px] h-[15px] bg-[#dcd8cc] flex items-center justify-center"><span className="border-y-[4px] border-r-[5px] border-y-transparent border-r-black" /></div>
    <div className="ml-[288px] w-[647px] h-[15px] bg-[#d8d4c4] border-b-2 border-[#888474]" />
    <div className="w-[17px] h-[15px] bg-[#dcd8cc] flex items-center justify-center border-b-2 border-[#888474]"><span className="border-y-[4px] border-l-[5px] border-y-transparent border-l-black" /></div>
  </div>
);

const BottomTab = ({ width, icon, children }) => (
  <div className={`${width} h-[21px] flex items-center border-x border-t border-[#b0aca0] rounded-t-[2px] bg-[image:repeating-conic-gradient(#f4f2ea_0_25%,#dcd8cc_0_50%)] bg-size-[2px_2px] text-[12.5px] text-[#777]`}>
    {icon}
    <span>{children}</span>
  </div>
);

const BottomTabs = () => (
  <div className="h-[24px] pt-[3px] pl-[3px] flex bg-[linear-gradient(to_right,#eeeae4,#ffffff_82%)]">
    <BottomTab width="w-[94px]" icon={<span className="ml-[5px] mr-[9px] w-[13px] text-[16px] leading-none font-bold text-[#089090]">€</span>}>Ordenes</BottomTab>
    <BottomTab width="w-[87px]" icon={
      <svg width="16" height="18" viewBox="0 0 16 18" className="block mx-[4px] mr-[9px]"><path d="M2 1L13 10L12 14L4 12L2 6Z" fill="#f0e020" stroke="#553" /><circle cx="12" cy="15" r="2" fill="#333" /></svg>
    }>Alertas</BottomTab>
    <BottomTab width="w-[91px]" icon={
      <span className="ml-[4px] mr-[9px] w-[14px] h-[14px] border-2 border-[#088008] bg-white flex items-center justify-center text-[10px] font-bold leading-none text-[#088008]">N</span>
    }>Noticias</BottomTab>
  </div>
);

export default function App() {
  return (
    <div className="relative w-[1280px] h-[993px] overflow-hidden flex flex-col bg-[#0a40c8] font-['Liberation_Sans','Arial',sans-serif]">
      <TitleBar />
      <div className="ml-[4px] mr-[3px] mb-[5px] flex-1 min-h-0 flex flex-col">
        <MenuBar />
        <Toolbar />
        <div className="flex-1 min-h-0 flex">
          <SideTools />
          <div className="w-[1245px] flex flex-col bg-[#ffffc8]">
            <div className="h-[16px] flex items-center justify-between border-t border-[#8c8878] bg-[image:repeating-conic-gradient(#ffffc4_0_25%,#dcdca0_0_50%)] bg-size-[2px_2px]">
              <div className="flex items-center text-[10.500px] whitespace-pre">
                <span className="w-[9px] h-[13px] bg-[#c8c4bc] flex items-center justify-center mr-[4px]"><span className="border-y-[3px] border-l-[4px] border-y-transparent border-l-black" /></span>
                <span className="text-[#00c000]">FGBLZ6 - EURO BUND FUTURE  DEC - 2006 - Intradía 60 minutos H: </span>
                <span className="text-[#000080]">10:00 </span><span className="text-[#00c000]"> A: </span>
                <span className="text-[#000080]">116,25 </span><span className="text-[#00c000]"> M: </span>
                <span className="text-[#000080]">116,25 </span><span className="text-[#00c000]"> m: </span>
                <span className="text-[#000080]">116,19 </span><span className="text-[#00c000]"> C: </span>
                <span className="text-[#000080]">116,19 </span><span className="text-[#f00000]"> P : 114,99 </span>
                <span className="text-[#008000]"> V: 7 </span><span className="text-[#00c000]"> F: </span>
                <span className="text-[#000080]">02/08/2006</span>
              </div>
              <PaneButtons />
            </div>
            <div className="h-[445px] overflow-hidden"><MainChart /></div>
            <div className="bg-[image:repeating-conic-gradient(#969696_0_25%,#bcbcbc_0_50%)] bg-size-[2px_2px]">
              <div className="h-[15px] flex items-center justify-between border-t border-black text-[10.500px] whitespace-pre pl-[13px]">
                <div className="mt-[2px]">
                  <span className="text-[#007000]">Stochastic_FGBLZ6  SK: </span><span className="text-[#000080]">69,0331  </span>
                  <span className="text-[#f00000]">SD: </span><span className="text-[#000080]">53,2788  </span>
                  <span className="text-[#0000e0]">UppperBand: </span><span className="text-[#000080]">80,0000  </span>
                  <span className="text-[#0000e0]">LowerBand: </span><span className="text-[#000080]">20,0000  </span>
                  <span className="text-[#f00000]">P: 159,2357</span>
                </div>
                <PaneButtons />
              </div>
              <StochChart />
            </div>
            <div className="bg-[image:repeating-conic-gradient(#b4b0b4_0_25%,#d0ccd0_0_50%)] bg-size-[2px_2px]">
              <div className="h-[15px] flex items-center justify-between text-[10.500px] whitespace-pre pl-[13px]">
                <div className="mt-[2px] tracking-[0.08px]">
                  <span className="text-[#f0f000]">XRSIB_FGBLZ6  Linea1: </span><span className="text-[#000080]">80,0000  </span>
                  <span className="text-[#0000c0]">Linea2: </span><span className="text-[#000080]">60,0000  </span>
                  <span className="text-[#00e000]">Linea3: </span><span className="text-[#000080]">40,0000  </span>
                  <span className="text-[#f00000]">Linea4: </span><span className="text-[#000080]">20,0000  </span>
                  <span className="text-[#000]">Linea5: </span><span className="text-[#000080]">53,2977  </span>
                  <span className="text-[#f00000]">P: 205,9305</span>
                </div>
                <PaneButtons />
              </div>
              <RsiChart />
            </div>
            <TimeAxis />
            <SheetTabs />
            <BottomTabs />
          </div>
        </div>
      </div>
      <div className="absolute left-[503px] top-[2px] w-[127px] h-[34px] bg-white border border-[#b8b8b8] flex items-center justify-center text-[22px] text-[#cc3333] whitespace-pre">EZ  104.185</div>
    </div>
  );
}
